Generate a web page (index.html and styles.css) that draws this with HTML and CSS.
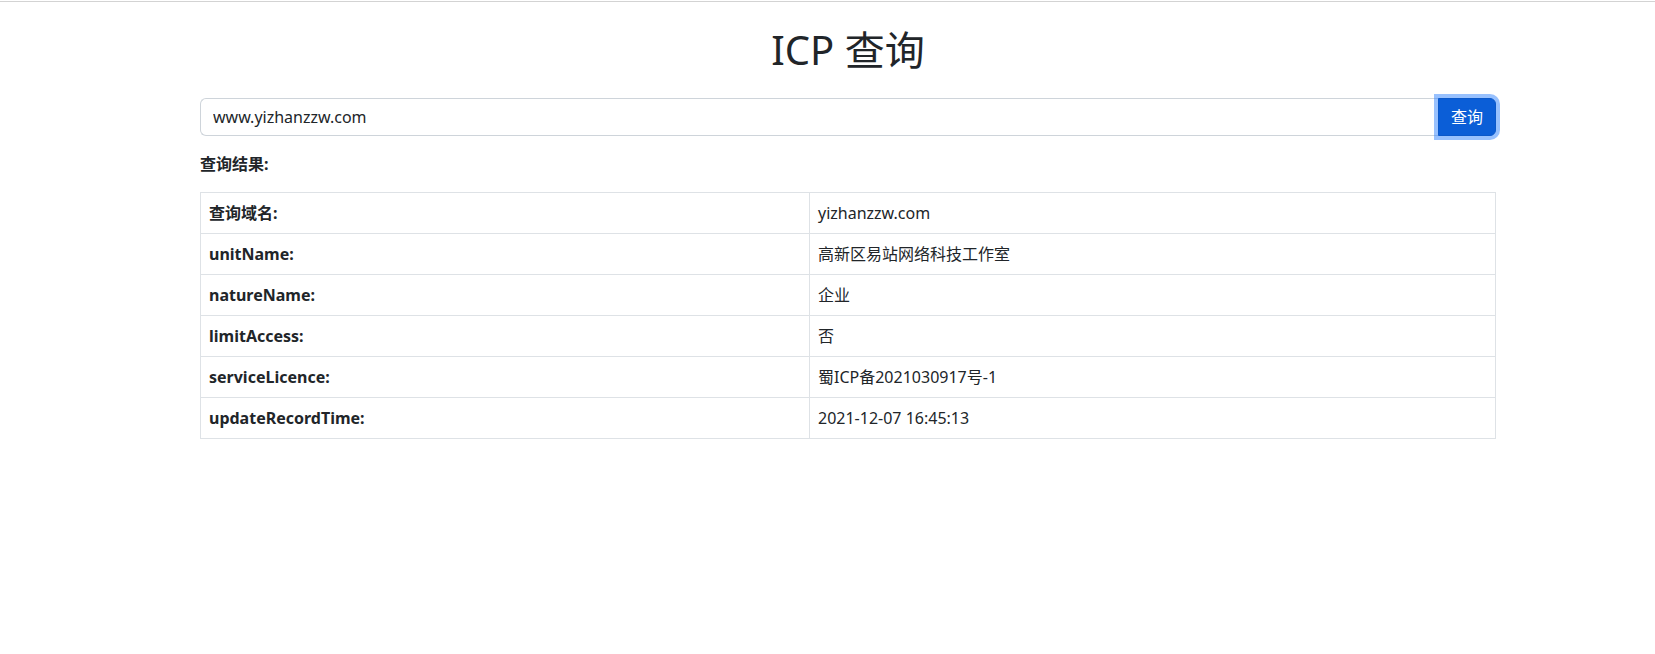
FILE: index.html
```html
<!DOCTYPE html>
<html lang="zh-CN">
<head>
<meta charset="utf-8">
<title>ICP 查询</title>
<link rel="stylesheet" href="styles.css">
</head>
<body>
<div class="topline"></div>
<main class="container">
  <h1 class="title">ICP 查询</h1>
  <form class="search" onsubmit="return false">
    <input class="search-input" type="text" value="www.yizhanzzw.com">
    <button class="search-btn" type="submit">查询</button>
  </form>
  <p class="result-label">查询结果:</p>
  <table class="result-table">
    <colgroup><col class="col-key"><col class="col-val"></colgroup>
    <tbody>
      <tr><th>查询域名:</th><td>yizhanzzw.com</td></tr>
      <tr><th>unitName:</th><td>高新区易站网络科技工作室</td></tr>
      <tr><th>natureName:</th><td>企业</td></tr>
      <tr><th>limitAccess:</th><td>否</td></tr>
      <tr><th>serviceLicence:</th><td>蜀ICP备2021030917号-1</td></tr>
      <tr><th>updateRecordTime:</th><td>2021-12-07 16:45:13</td></tr>
    </tbody>
  </table>
</main>
</body>
</html>
```

FILE: styles.css
```css
* {
  box-sizing: border-box;
}

html, body {
  margin: 0;
  padding: 0;
  background: #fff;
}

body {
  font-family: "Noto Sans", "Noto Sans CJK SC", sans-serif;
  font-size: 16px;
  line-height: 1.5;
  color: #212529;
}

.topline {
  margin-top: 1px;
  border-top: 1px solid #d3d3d3;
}

.container {
  width: 1296px;
  margin: 0 0 0 200px;
}

.title {
  margin: 24px 0 24px;
  font-size: 40px;
  font-weight: 400;
  line-height: 1.2;
  text-align: center;
}

.search {
  display: flex;
  margin: 0 0 16px;
}

.search-input {
  flex: 1;
  min-width: 0;
  height: 38px;
  padding: 6px 12px;
  font: inherit;
  color: #212529;
  border: 1px solid #ced4da;
  border-right: 0;
  border-radius: 6px 0 0 6px;
  outline: none;
}

.search-btn {
  position: relative;
  z-index: 2;
  width: 58px;
  height: 38px;
  padding: 6px 12px;
  font: inherit;
  color: #fff;
  background: #0b5ed7;
  border: 1px solid #0a58ca;
  border-radius: 0 6px 6px 0;
  box-shadow: 0 0 0 4px rgba(49, 132, 253, 0.5);
  cursor: pointer;
}

.result-label {
  margin: 0 0 16px;
  font-weight: 700;
}

.result-table {
  width: 100%;
  border-collapse: collapse;
  table-layout: fixed;
}

.col-key {
  width: 609px;
}

.result-table th,
.result-table td {
  padding: 8px;
  border: 1px solid #dee2e6;
  text-align: left;
  vertical-align: top;
}

.result-table th {
  font-weight: 700;
}
```
